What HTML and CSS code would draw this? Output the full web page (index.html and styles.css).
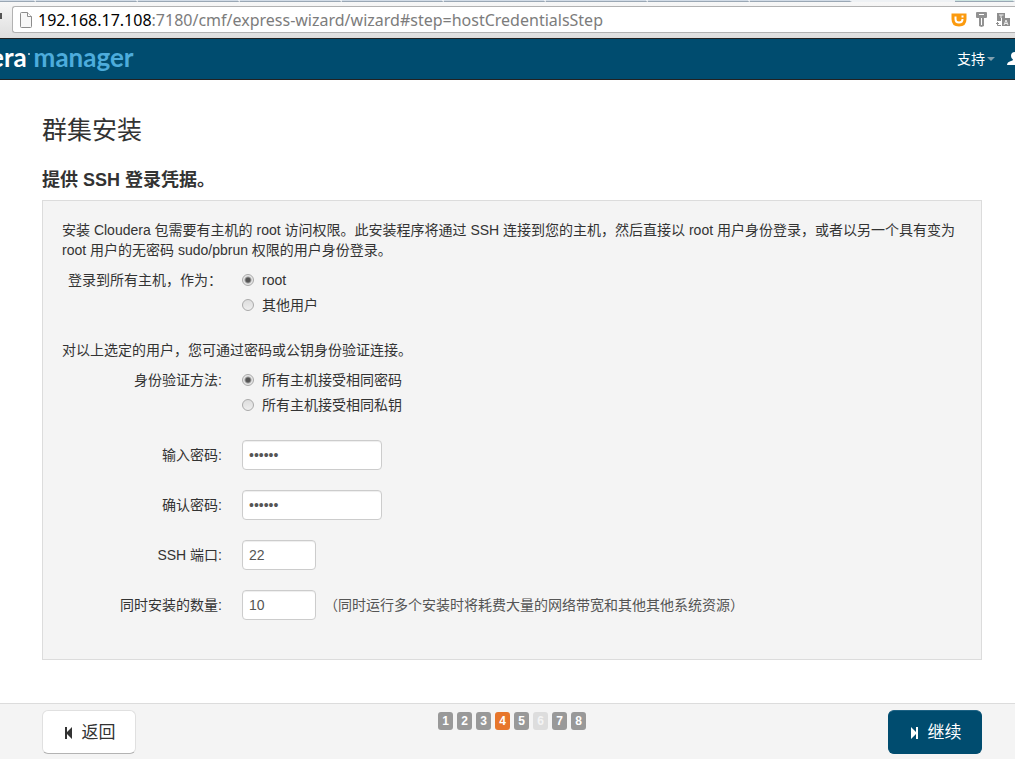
FILE: index.html
```html
<!DOCTYPE html>
<html lang="zh-CN">
<head>
<meta charset="utf-8">
<title>群集安装</title>
<link rel="stylesheet" href="styles.css">
</head>
<body>
<div class="page">
  <div class="tabs"><span class="tab"></span><span class="tab"></span><span class="tab"></span><span class="tab"></span><span class="tab"></span><span class="tab"></span><span class="tab"></span><span class="tab"></span><span class="tab"></span><span class="strip-gap"></span><span class="tab tab-end"></span></div>
  <div class="toolbar">
    <span class="reload"></span>
    <div class="address">
      <svg class="doc" width="12" height="16" viewBox="0 0 12 16"><path d="M.5 1.500Q.5.5 1.500.5H7.500L11.500 4.500V14.500Q11.500 15.500 10.500 15.500H1.500Q.5 15.500.5 14.500Z" fill="#f7f7f7" stroke="#8c8c8c"/><path d="M7.500.5V4.500H11.500" fill="#fff" stroke="#8c8c8c"/></svg>
      <span class="url"><b class="host">192.168.17.108</b>:7180/cmf/express-wizard/wizard#step=hostCredentialsStep</span>
      <div class="actions">
        <svg width="16" height="14" viewBox="0 0 16 14"><path d="M.5.5H15.500V6Q15.500 13.500 8 13.500T.5 6Z" fill="#fb9a0e"/><path d="M4.500 3.500V6Q4.500 9.500 8 9.500T11.500 6" fill="none" stroke="#fff" stroke-width="2"/><path d="M10.500 2.500h2v2h-2z" fill="#fff"/></svg>
        <svg width="11" height="15" viewBox="0 0 11 15"><path d="M1 0H10Q11 0 11 1V5Q11 6 10 6H8V14L5.500 15L3 14V6H1Q0 6 0 5V1Q0 0 1 0Z" fill="#929292"/><path d="M3 2.500H8M5.500 6V13" stroke="#fff"/></svg>
        <svg width="14" height="14" viewBox="0 0 14 14"><path d="M1 0H9V5H5V8H1Z" fill="#8e8e8e"/><path d="M3 2H7.500M5 2V5" stroke="#eee"/><path d="M6 5H14V13H6Z" fill="#8e8e8e"/><path d="M8 12L10 7L12 12M9 10.500H11" stroke="#eee" fill="none"/><path d="M0 10.500H3M1.500 9V12.500H5" stroke="#8e8e8e" fill="none"/></svg>
      </div>
    </div>
  </div>
  <header class="navbar">
    <a class="brand" href="#"><span class="brand-main">era</span><span class="brand-dot"></span><span class="brand-sub">manager</span></a>
    <a class="support" href="#">支持<span class="caret"></span></a>
    <svg class="user" width="16" height="14" viewBox="0 0 16 14"><path d="M0 13Q0 10 4 9Q6 8.500 6 7.500Q4 6 4 4Q4 0 8 0T12 4Q12 6 10 7.500Q10 8.500 12 9Q16 10 16 13Z" fill="#fff"/></svg>
  </header>
  <main class="content">
    <h1 class="title">群集安装</h1>
    <h2 class="subtitle">提供 SSH 登录凭据。</h2>
    <form class="well" id="credentials">
      <p class="text">安装 Cloudera 包需要有主机的 root 访问权限。此安装程序将通过 SSH 连接到您的主机，然后直接以 root 用户身份登录，或者以另一个具有变为 root 用户的无密码 sudo/pbrun 权限的用户身份登录。</p>
      <div class="row radios" role="radiogroup" aria-labelledby="login-as">
        <span class="label" id="login-as">登录到所有主机，作为：</span>
        <div class="options">
          <label class="option"><input class="radio" type="radio" name="user" checked>root</label>
          <label class="option"><input class="radio" type="radio" name="user">其他用户</label>
        </div>
      </div>
      <p class="text">对以上选定的用户，您可通过密码或公钥身份验证连接。</p>
      <div class="row radios" role="radiogroup" aria-labelledby="auth">
        <span class="label" id="auth">身份验证方法:</span>
        <div class="options">
          <label class="option"><input class="radio" type="radio" name="method" checked>所有主机接受相同密码</label>
          <label class="option"><input class="radio" type="radio" name="method">所有主机接受相同私钥</label>
        </div>
      </div>
      <div class="row"><label class="label" for="pw">输入密码:</label><input class="field" id="pw" type="password" value="secret"></div>
      <div class="row"><label class="label" for="pw2">确认密码:</label><input class="field" id="pw2" type="password" value="secret"></div>
      <div class="row"><label class="label" for="port">SSH 端口:</label><input class="field short" id="port" type="text" value="22"></div>
      <div class="row"><label class="label" for="count">同时安装的数量:</label><input class="field short" id="count" type="text" value="10"><span class="hint">（同时运行多个安装时将耗费大量的网络带宽和其他其他系统资源）</span></div>
    </form>
  </main>
  <footer class="footer">
    <button class="btn" type="button"><svg class="btn-icon" width="8" height="12" viewBox="0 0 8 12"><path d="M0 0H2V5L7 0V12L2 7V12H0Z" fill="currentColor"/></svg>返回</button>
    <div class="steps"><span class="step">1</span><span class="step">2</span><span class="step">3</span><span class="step current">4</span><span class="step">5</span><span class="step skipped">6</span><span class="step">7</span><span class="step">8</span></div>
    <button class="btn primary" type="submit" form="credentials"><svg class="btn-icon" width="8" height="12" viewBox="0 0 8 12"><path d="M7 0H5V5L0 0V12L5 7V12H7Z" fill="currentColor"/></svg>继续</button>
  </footer>
</div>
</body>
</html>
```
FILE: styles.css
```css
* { box-sizing: border-box; }
body {
  margin: 0;
  background: #fff;
  color: #333;
  font: 14px/20px "Liberation Sans", "Noto Sans CJK SC", sans-serif;
}
.page { display: flex; flex-direction: column; min-height: 100vh; overflow: hidden; }
.tabs { display: flex; height: 2px; background: #eef1f4; }
.tab { flex: 0 0 102px; background: #d2dce7; border-bottom: 1px solid #9aa7b4; border-right: 2px solid #eef1f4; }
.tab:first-child { flex-basis: 36px; }
.strip-gap { flex: 1; }
.tab-end { flex-basis: 60px; background: #cde5e2; }
.toolbar {
  display: flex;
  height: 36px;
  padding: 4px 0 5px;
  gap: 10px;
  background: linear-gradient(#f7f7f7, #dedede);
}
.reload { width: 2px; height: 6px; margin-top: 7px; background: #555; }
.address {
  flex: 1;
  display: flex;
  align-items: center;
  gap: 6px;
  padding: 0 5px 0 7px;
  background: #fff;
  border: 1px solid #b2b2b2;
  border-right: 0;
  border-radius: 3px 0 0 3px;
}
.url { flex: 1; white-space: nowrap; font: 16px/24px "Noto Sans", sans-serif; color: #7c7c7c; }
.host { font-weight: 400; color: #000; }
.actions { display: flex; align-items: center; gap: 9px; }
.navbar {
  display: flex;
  align-items: center;
  height: 42px;
  background: #004c6f;
  border-top: 1px solid #222;
  border-bottom: 1px solid #222;
}
.brand { display: flex; margin: -4px auto 0 -10px; color: #fff; font: 700 26px/30px Lato, sans-serif; text-decoration: none; }
.brand-dot { width: 2px; height: 2px; margin: 11px 4px 0 1px; background: #9bb8c6; }
.brand-sub { color: #4dacdc; }
.support { display: flex; align-items: center; gap: 2px; color: #fff; text-decoration: none; }
.caret { border: 4px solid transparent; border-top-color: #809fae; border-bottom: 0; }
.user { margin: 0 -8px 0 12px; }
.content { padding: 30px 33px 43px 42px; }
.title { margin: 0; font-size: 25px; line-height: 40px; font-weight: 400; }
.subtitle { margin: 20px 0 10px; font-size: 18px; line-height: 20px; font-weight: 700; }
.well { padding: 19px 19px 39px; background: #f4f4f4; border: 1px solid #dcdcdc; }
.text { margin: 0 0 10px; }
.row { display: flex; align-items: center; gap: 20px; margin-bottom: 20px; }
.row:last-child { margin-bottom: 0; }
.radios { align-items: flex-start; margin-bottom: 25px; }
.label { width: 160px; text-align: right; }
.options { display: flex; flex-direction: column; gap: 5px; }
.option { display: flex; align-items: center; gap: 8px; }
.radio {
  appearance: none;
  width: 12px;
  height: 12px;
  margin: 0;
  border: 1px solid #aaa;
  border-radius: 50%;
  background: linear-gradient(#ddd, #eee);
}
.radio:checked { background: radial-gradient(circle, #555 0 2px, #e6e6e6 4px); }
.field {
  width: 140px;
  height: 30px;
  padding: 4px 6px;
  color: #555;
  font: 14px/20px "Liberation Sans", sans-serif;
  background: #fff;
  border: 1px solid #ccc;
  border-radius: 4px;
  box-shadow: inset 0 1px 1px #eee;
}
.short { width: 74px; }
.hint { margin-left: -12px; color: #555; }
.footer {
  flex: 1;
  display: flex;
  align-items: flex-start;
  justify-content: space-between;
  padding: 6px 33px 5px 42px;
  background: #f4f4f4;
  border-top: 1px solid #dcdcdc;
}
.btn {
  display: flex;
  align-items: center;
  justify-content: center;
  gap: 9px;
  width: 94px;
  height: 44px;
  padding: 2px 0 0 2px;
  color: #333;
  font: 17px/24px "Liberation Sans", "Noto Sans CJK SC", sans-serif;
  background: #fff;
  border: 1px solid #e0e0e0;
  border-bottom-color: #b3b3b3;
  border-radius: 6px;
}
.primary { color: #fff; background: #004c6f; border-color: #004c6f; border-top-color: #1d6284; }
.steps { display: flex; gap: 4px; padding-top: 2px; }
.step {
  width: 15px;
  height: 18px;
  border-radius: 3px;
  background: #999;
  color: #fff;
  font-size: 12px;
  line-height: 18px;
  font-weight: 700;
  text-align: center;
}
.current { background: #e7762b; }
.skipped { background: #ddd; color: #f4f4f4; }
```
